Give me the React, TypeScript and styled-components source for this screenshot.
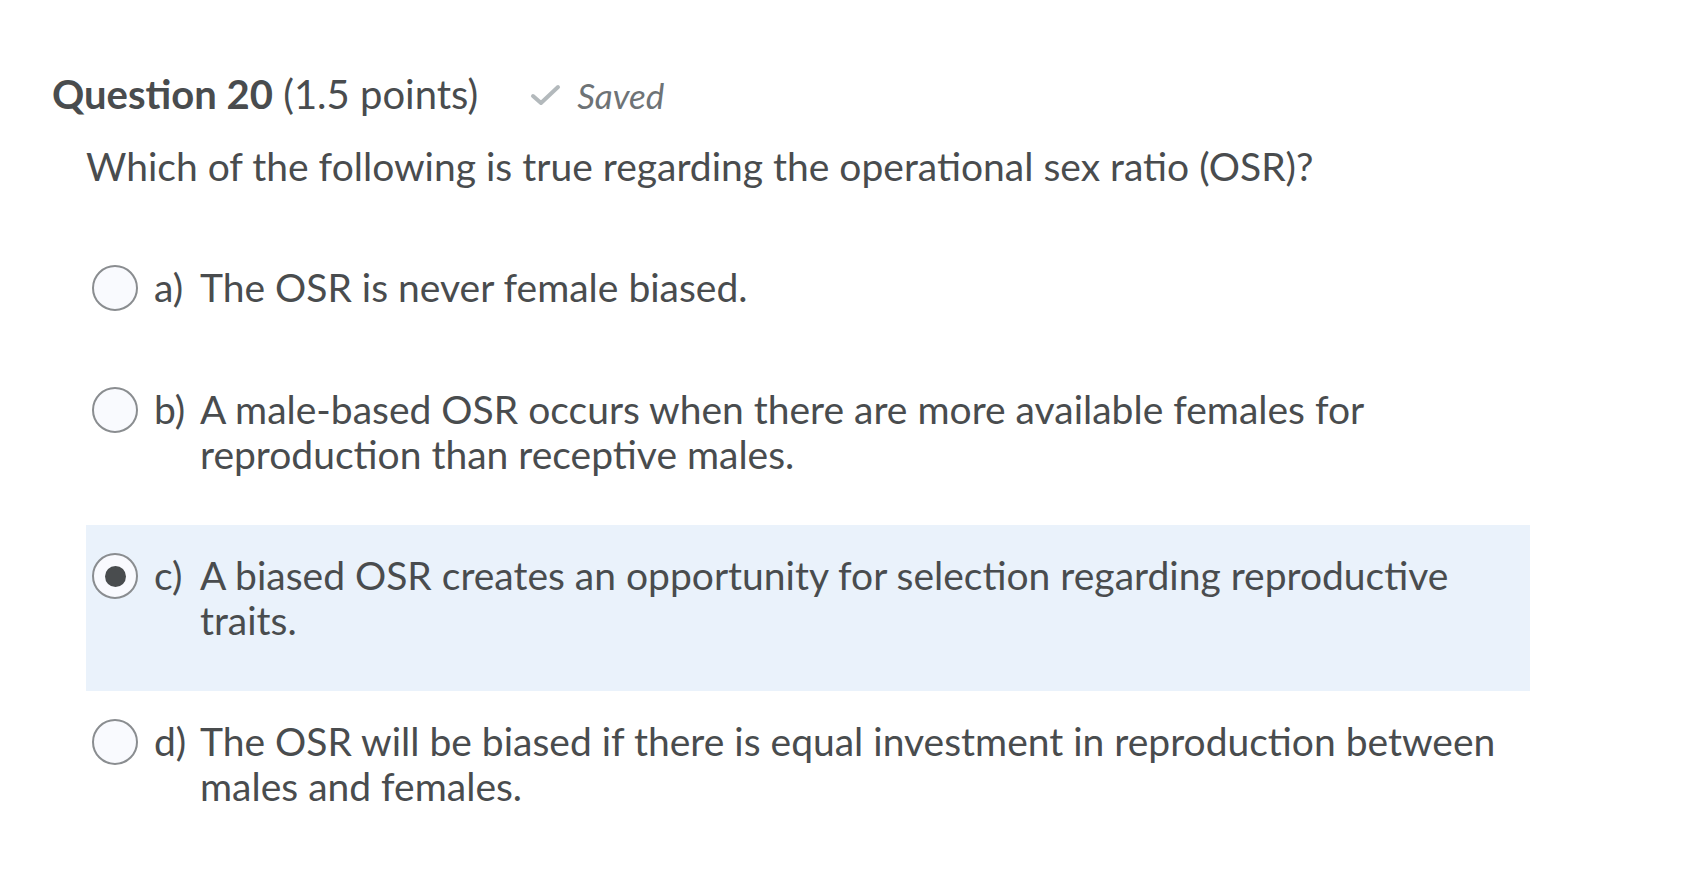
import React from 'react';
import styled, { createGlobalStyle } from 'styled-components';

const GlobalStyle = createGlobalStyle`
  html, body {
    margin: 0;
    padding: 0;
    background: #ffffff;
  }

  body {
    font-family: Lato, 'Noto Sans', sans-serif;
    color: #494c4e;
  }
`;

const Page = styled.div`
  padding: 72px 0 40px 52px;
`;

const Header = styled.div`
  height: 45px;

  display: flex;
  align-items: center;
  gap: 52px;
`;

const Title = styled.h2`
  margin: 0;

  font-size: 40px;
  font-weight: 400;
  line-height: 45px;
  color: #494c4e;

  strong {
    font-weight: 700;
  }
`;

const SavedTag = styled.span`
  display: flex;
  align-items: center;
  gap: 16px;

  font-size: 35px;
  font-style: italic;
  color: #6e7376;
`;

const Prompt = styled.p`
  margin: 27px 0 0 34px;

  font-size: 39px;
  line-height: 45px;
`;

const Options = styled.div`
  width: 1444px;
  margin: 48px 0 0 34px;

  display: flex;
  flex-direction: column;
`;

const Option = styled.label<{ $selected: boolean }>`
  padding: 28px 0 48px 6px;

  display: flex;
  align-items: flex-start;

  background-color: ${(props) => (props.$selected ? '#eaf2fb' : 'transparent')};
`;

const Radio = styled.span<{ $checked: boolean }>`
  width: 46px;
  height: 46px;
  margin-right: 16px;
  flex-shrink: 0;

  box-sizing: border-box;
  border: 2px solid #8a8d90;
  border-radius: 50%;
  background-color: #f9fafe;

  display: flex;
  align-items: center;
  justify-content: center;

  &::after {
    width: 21px;
    height: 21px;

    border-radius: 50%;
    background-color: #494c4e;

    content: '';
    display: ${(props) => (props.$checked ? 'block' : 'none')};
  }
`;

const Letter = styled.span`
  width: 46px;
  flex-shrink: 0;

  font-size: 39px;
  line-height: 45px;
`;

const OptionText = styled.span`
  font-size: 39px;
  line-height: 45px;
  white-space: nowrap;
`;

const options = [
  { letter: 'a)', lines: ['The OSR is never female biased.'] },
  {
    letter: 'b)',
    lines: ['A male-based OSR occurs when there are more available females for', 'reproduction than receptive males.'],
  },
  {
    letter: 'c)',
    lines: ['A biased OSR creates an opportunity for selection regarding reproductive', 'traits.'],
  },
  {
    letter: 'd)',
    lines: ['The OSR will be biased if there is equal investment in reproduction between', 'males and females.'],
  },
];

export default function App() {
  const selected = 'c)';

  return (
    <Page>
      <GlobalStyle />
      <Header>
        <Title>
          <strong>Question 20</strong> (1.5 points)
        </Title>
        <SavedTag>
          <svg width="31" height="24" viewBox="0 0 31 24" fill="none">
            <path
              d="M3 13 L11 20 L28 4"
              stroke="#b3b9bc"
              strokeWidth="4"
              strokeLinecap="round"
              strokeLinejoin="round"
            />
          </svg>
          Saved
        </SavedTag>
      </Header>

      <Prompt>Which of the following is true regarding the operational sex ratio (OSR)?</Prompt>

      <Options>
        {options.map((option) => (
          <Option key={option.letter} $selected={option.letter === selected}>
            <Radio $checked={option.letter === selected} />
            <Letter>{option.letter}</Letter>
            <OptionText>
              {option.lines.map((line, i) => (
                <React.Fragment key={i}>
                  {i > 0 && <br />}
                  {line}
                </React.Fragment>
              ))}
            </OptionText>
          </Option>
        ))}
      </Options>
    </Page>
  );
}
